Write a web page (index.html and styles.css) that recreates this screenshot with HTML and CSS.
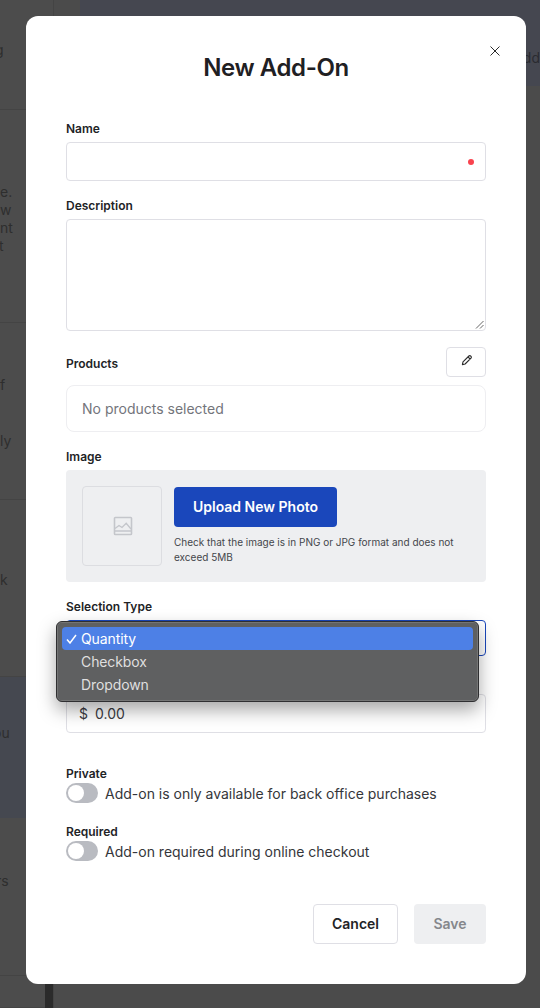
FILE: index.html
```html
<!DOCTYPE html>
<html lang="en">
<head>
<meta charset="utf-8">
<title>New Add-On</title>
<link rel="stylesheet" href="styles.css">
</head>
<body>
<div class="backdrop">
  <aside class="bg-list">
    <div class="bg-item bg-a"><span class="cut-g">g</span></div>
    <div class="bg-item bg-b"><span>e.</span><span>w</span><span>nt</span><span class="cut-t">t</span></div>
    <div class="bg-item bg-c"><span>f</span><span class="gap">ly</span></div>
    <div class="bg-item bg-d"><span>k</span></div>
    <div class="bg-item bg-e"><span class="cut-ou">ou</span></div>
    <div class="bg-item bg-f"><span class="cut-rs">rs</span></div>
    <div class="bg-item bg-g"></div>
  </aside>
  <div class="bg-rail"></div>
  <main class="bg-main">
    <div class="bg-top"><span>dd</span></div>
  </main>
</div>

<section class="modal">
  <button class="close" type="button" aria-label="Close">
    <svg width="12" height="12" viewBox="0 0 12 12"><path d="M1.5 1.5l9 9M10.5 1.5l-9 9" fill="none" stroke="#2b2b2b" stroke-width="1"/></svg>
  </button>
  <h1>New Add-On</h1>

  <label class="label name-label">Name</label>
  <div class="input"><i class="req"></i></div>

  <label class="label desc-label">Description</label>
  <div class="textarea">
    <svg class="grip" width="9" height="9" viewBox="0 0 9 9"><path d="M1 8.5L8.5 1M5 8.5L8.5 5" stroke="#555" stroke-width="0.9" fill="none"/></svg>
  </div>

  <div class="products-head">
    <label class="label products-label">Products</label>
    <button class="edit" type="button" aria-label="Edit">
      <svg width="12" height="12" viewBox="0 0 12 12"><path d="M1.4 10.6l.6-2.7 5.9-5.9a1.2 1.2 0 0 1 1.7 0l.4.4a1.2 1.2 0 0 1 0 1.7L4.1 10zM7 2.9l2.1 2.1" fill="none" stroke="#2b2b2b" stroke-width="1.1" stroke-linejoin="round"/></svg>
    </button>
  </div>
  <div class="products">No products selected</div>

  <label class="label image-label">Image</label>
  <div class="image-panel">
    <div class="thumb">
      <svg class="thumb-icon" width="20" height="20" viewBox="0 0 20 20"><rect x="1.5" y="1.5" width="17" height="17" rx="0.8" fill="none" stroke="#c4c6cb" stroke-width="1.6"/><path d="M2 12.5l4-3 3 2 4.2-4.2 4.8 5.7M2 15h16" fill="none" stroke="#c4c6cb" stroke-width="1.3"/></svg>
    </div>
    <div class="upload">
      <button class="primary" type="button">Upload New Photo</button>
      <p>Check that the image is in PNG or JPG format and does not exceed 5MB</p>
    </div>
  </div>

  <label class="label sel-label">Selection Type</label>
  <div class="select-wrap">
    <div class="select"></div>
    <div class="menu">
      <div class="opt active">
        <svg class="tick" width="11" height="10" viewBox="0 0 11 10"><path d="M1 5.5L4 9l6-8" fill="none" stroke="#fff" stroke-width="1.5"/></svg>Quantity
      </div>
      <div class="opt">Checkbox</div>
      <div class="opt">Dropdown</div>
    </div>
  </div>

  <div class="input price"><span class="dollar">$</span><span>0.00</span></div>

  <label class="label private-label">Private</label>
  <div class="toggle-row"><span class="toggle"></span><span>Add-on is only available for back office purchases</span></div>

  <label class="label required-label">Required</label>
  <div class="toggle-row"><span class="toggle"></span><span>Add-on required during online checkout</span></div>

  <div class="actions">
    <button class="cancel" type="button">Cancel</button>
    <button class="save" type="button">Save</button>
  </div>
</section>
</body>
</html>
```
FILE: styles.css
```css
* { box-sizing: border-box; }
html, body { margin: 0; height: 100%; }
body {
  width: 540px;
  height: 1008px;
  overflow: hidden;
  position: relative;
  font-family: Inter, "Liberation Sans", sans-serif;
  color: #222326;
  background: #4b4b4b;
}
.backdrop { position: absolute; inset: 0; display: flex; }
.bg-list { width: 45px; background: #4c4c4c; display: flex; flex-direction: column; color: #2e2e2e; font-size: 14px; line-height: 18px; }
.bg-item { display: flex; flex-direction: column; border-bottom: 1px solid #444; overflow: hidden; }
.bg-item span { display: block; }
.bg-item .cut-g { margin-left: -5px; }
.bg-item .cut-t { margin-left: -1px; }
.bg-item .cut-ou { margin-left: -7px; }
.bg-item .cut-rs { margin-left: -4px; }
.bg-a { height: 110px; padding-top: 41px; }
.bg-b { height: 213px; padding-top: 73px; }
.bg-c { height: 177px; padding-top: 53px; }
.bg-c .gap { margin-top: 38px; }
.bg-d { height: 177px; padding-top: 71px; }
.bg-e { height: 141px; padding-top: 47px; background: #454850; border-bottom: 0; }
.bg-f { height: 158px; padding-top: 54px; }
.bg-g { flex: 1; }
.bg-rail { width: 9px; border-right: 1px solid #444; background: linear-gradient(#4c4c4c 0, #4c4c4c 984px, #2b2b2b 984px); }
.bg-main { flex: 1; background: #4b4b4b; }
.bg-top { height: 86px; background: #454750; margin-left: 26px; color: #2a2b30; font-size: 14px; text-align: right; padding-top: 49px; }

.modal {
  position: absolute;
  left: 26px;
  top: 16px;
  width: 500px;
  height: 968px;
  background: #fff;
  border-radius: 12px;
  padding: 33px 40px 0;
}
.close { position: absolute; top: 29px; right: 25px; width: 12px; height: 12px; padding: 0; border: 0; background: none; display: flex; }
h1 { margin: 0; font-size: 24px; line-height: 38px; font-weight: 600; letter-spacing: -0.4px; text-align: center; color: #1f2023; }
.label { display: block; font-size: 12px; line-height: 16px; font-weight: 600; color: #222326; }
.name-label { margin-top: 34px; }
.input, .textarea { border: 1px solid #dfdfe5; border-radius: 4px; background: #fff; margin-top: 5px; }
.input { height: 39px; position: relative; }
.req { position: absolute; right: 11px; top: 16px; width: 6px; height: 6px; border-radius: 50%; background: #f9434e; }
.desc-label { margin-top: 17px; }
.textarea { height: 112px; position: relative; }
.grip { position: absolute; right: 1px; bottom: 1px; }
.products-head { display: flex; justify-content: space-between; align-items: center; margin-top: 16px; height: 30px; }
.products-label { margin-top: 4px; }
.edit { width: 40px; height: 30px; padding: 0 0 4px 1px; border: 1px solid #dfdfe5; border-radius: 4px; background: #fff; display: flex; align-items: center; justify-content: center; }
.products { margin-top: 8px; height: 47px; border: 1px solid #eeeef1; border-radius: 8px; padding: 0 15px; display: flex; align-items: center; font-size: 14px; color: #73757b; }
.image-label { margin-top: 17px; }
.image-panel { margin-top: 5px; height: 112px; background: #eeeff1; border-radius: 4px; padding: 16px; display: flex; gap: 12px; }
.thumb { width: 80px; height: 80px; border: 1px solid #dcdde1; border-radius: 4px; display: flex; align-items: center; justify-content: center; }
.thumb-icon { margin-left: 2px; margin-bottom: 1px; }
.upload { flex: 1; padding-top: 1px; }
.primary { width: 163px; height: 40px; border: 0; border-radius: 4px; background: #1a47bb; color: #fff; font: 600 14px/40px Inter, "Liberation Sans", sans-serif; padding: 0; display: block; }
.upload p { margin: 8px 0 0; font-size: 10px; line-height: 15px; color: #44464b; }
.sel-label { margin-top: 17px; }
.select-wrap { position: relative; margin-top: 5px; height: 36px; }
.select { height: 36px; border: 1px solid #1a47bb; border-radius: 4px; background: #fff; }
.menu {
  position: absolute;
  left: -10px;
  top: 1px;
  width: 423px;
  height: 81px;
  padding: 5px;
  border: 1px solid #2f2f31;
  border-radius: 6px;
  background: #5f6061;
  box-shadow: 0 0 0 0.5px #8a8a8a inset, 0 8px 18px rgba(0,0,0,.35);
  font-size: 14px;
  letter-spacing: -0.1px;
  color: #dfdfdf;
  z-index: 2;
}
.opt { height: 23px; line-height: 23px; padding-left: 19px; position: relative; }
.opt.active { background: #4d80e6; color: #fff; border-radius: 4px; height: 22.5px; }
.tick { position: absolute; left: 4px; top: 7px; }
.price { margin-top: 38px; display: flex; align-items: center; gap: 7px; padding-left: 12px; font-size: 14px; color: #3a3b3f; }
.private-label { margin-top: 33px; }
.required-label { margin-top: 21px; }
.toggle-row { display: flex; align-items: center; gap: 7px; height: 20px; margin-top: 1px; font-size: 14px; color: #35363a; }
.toggle { width: 32px; height: 20px; border-radius: 10px; background: #b9bbc1; position: relative; flex: none; }
.toggle::after { content: ""; position: absolute; left: 2px; top: 2px; width: 16px; height: 16px; border-radius: 50%; background: #fff; }
.actions { display: flex; justify-content: flex-end; gap: 16px; margin-top: 43px; }
.cancel, .save { height: 40px; border-radius: 4px; font: 600 14px/1 Inter, "Liberation Sans", sans-serif; padding: 0; }
.cancel { width: 85px; background: #fff; border: 1px solid #dfdfe5; color: #222326; }
.save { width: 72px; background: #eeeff1; border: 0; color: #85878c; }
```
